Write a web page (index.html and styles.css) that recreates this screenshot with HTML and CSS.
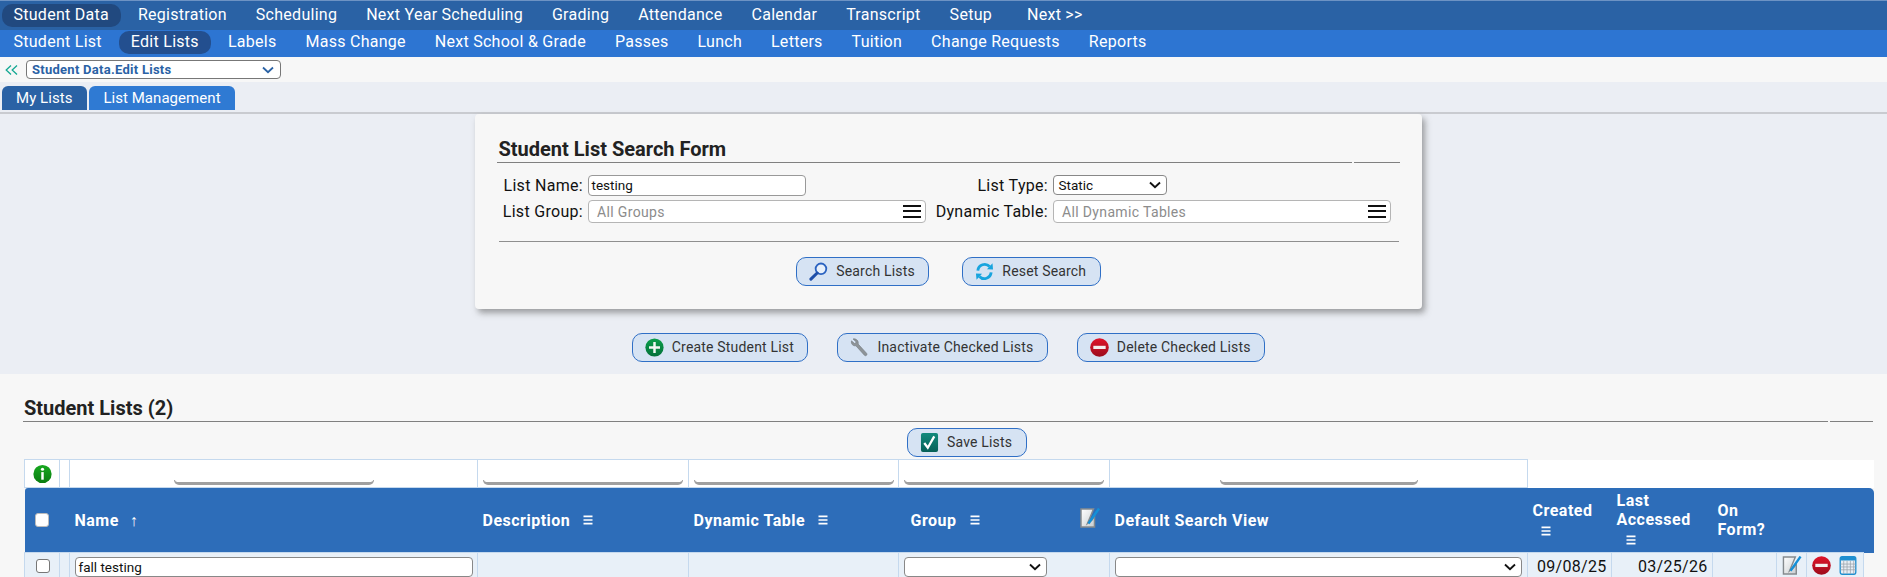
FILE: index.html
```html
<!DOCTYPE html>
<html lang="en">
<head>
<meta charset="utf-8">
<title>Student Lists</title>
<link rel="stylesheet" href="styles.css">
</head>
<body>
<svg class="defs" aria-hidden="true">
  <defs>
    <linearGradient id="gGreen" x1="0" y1="0" x2="0" y2="1"><stop offset="0" stop-color="#0aa04c"/><stop offset="1" stop-color="#04703a"/></linearGradient>
    <linearGradient id="gRed" x1="0" y1="0" x2="0" y2="1"><stop offset="0" stop-color="#e0142a"/><stop offset="1" stop-color="#9c0c1c"/></linearGradient>
    <linearGradient id="gTeal" x1="0" y1="0" x2="0" y2="1"><stop offset="0" stop-color="#128a7c"/><stop offset="1" stop-color="#056058"/></linearGradient>
    <linearGradient id="gInfo" x1="0" y1="0" x2="0" y2="1"><stop offset="0" stop-color="#17a81f"/><stop offset="1" stop-color="#0a7c12"/></linearGradient>
    <linearGradient id="gPage" x1="0" y1="0" x2="1" y2="1"><stop offset="0" stop-color="#ffffff"/><stop offset="1" stop-color="#c9cdd0"/></linearGradient>
    <symbol id="i-edit" viewBox="0 0 20 20">
      <path d="M1 1h12.500l-3.500 8.500-2.500 6 4.500-3.500 2.500-4.500V19H1z" fill="url(#gPage)" stroke="#858a8e" stroke-width="1.500"/>
      <path d="M19 .5 8.500 15.500" stroke="#1390d8" stroke-width="2.400" fill="none"/>
    </symbol>
    <symbol id="i-minus" viewBox="0 0 20 20">
      <circle cx="10" cy="10" r="9.800" fill="url(#gRed)"/>
      <rect x="3.500" y="8.200" width="13" height="3.400" fill="#f4eeee"/>
    </symbol>
    <symbol id="i-lines" viewBox="0 0 10 10">
      <path d="M.5 1.300h9M.5 5h9M.5 8.700h9" stroke="#fff" stroke-width="1.700" fill="none"/>
    </symbol>
  </defs>
</svg>

<nav class="nav nav-main">
  <a class="nav-item active">Student Data</a>
  <a class="nav-item">Registration</a>
  <a class="nav-item">Scheduling</a>
  <a class="nav-item">Next Year Scheduling</a>
  <a class="nav-item">Grading</a>
  <a class="nav-item">Attendance</a>
  <a class="nav-item">Calendar</a>
  <a class="nav-item">Transcript</a>
  <a class="nav-item">Setup</a>
  <a class="nav-item next">Next &gt;&gt;</a>
</nav>
<nav class="nav nav-sub">
  <a class="nav-item">Student List</a>
  <a class="nav-item active">Edit Lists</a>
  <a class="nav-item">Labels</a>
  <a class="nav-item">Mass Change</a>
  <a class="nav-item">Next School &amp; Grade</a>
  <a class="nav-item">Passes</a>
  <a class="nav-item">Lunch</a>
  <a class="nav-item">Letters</a>
  <a class="nav-item">Tuition</a>
  <a class="nav-item">Change Requests</a>
  <a class="nav-item">Reports</a>
</nav>

<div class="crumb">
  <svg class="crumb-back" viewBox="0 0 13 10" aria-hidden="true"><path d="M6 .5 1.200 5 6 9.500M12 .5 7.200 5 12 9.500" fill="none" stroke="#14a892" stroke-width="1.300"/></svg>
  <div class="crumb-select">
    <span>Student Data.Edit Lists</span>
    <svg viewBox="0 0 12 8" aria-hidden="true"><path d="M1 1.500 6 6.200 11 1.500" fill="none" stroke="#2a62a5" stroke-width="1.800"/></svg>
  </div>
</div>

<div class="upper">
  <div class="tabs">
    <a class="tab tab-dark">My Lists</a>
    <a class="tab tab-light">List Management</a>
  </div>

  <section class="card">
    <h2 class="title card-title"><span>Student List Search Form</span></h2>
    <div class="form-grid">
      <label class="lbl">List Name:</label>
      <div class="field-name">testing</div>
      <label class="lbl">List Type:</label>
      <div class="field-select">Static
        <svg viewBox="0 0 12 8" aria-hidden="true"><path d="M1 1.500 6 6.200 11 1.500" fill="none" stroke="#111" stroke-width="1.900"/></svg>
      </div>
      <label class="lbl">List Group:</label>
      <div class="field-multi">All Groups<span class="burger"></span></div>
      <label class="lbl">Dynamic Table:</label>
      <div class="field-multi">All Dynamic Tables<span class="burger"></span></div>
    </div>
    <hr class="rule">
    <div class="btn-row search-row">
      <a class="btn">
        <svg viewBox="0 0 20 20" aria-hidden="true"><circle cx="12.600" cy="7.200" r="5.600" fill="#e8f0fa" stroke="#2a62c0" stroke-width="1.900"/><path d="M8.600 11.600 2 18" stroke="#1f4fa8" stroke-width="3.200" stroke-linecap="round"/></svg>
        Search Lists</a>
      <a class="btn">
        <svg viewBox="0 0 20 20" aria-hidden="true"><path d="M3 9a7.200 7.200 0 0 1 12.400-4.200" fill="none" stroke="#18a4de" stroke-width="3"/><path d="M12.600 7.600 19 8 18.400 1.400z" fill="#18a4de"/><path d="M17 11a7.200 7.200 0 0 1-12.400 4.200" fill="none" stroke="#18a4de" stroke-width="3"/><path d="M7.400 12.400 1 12l.6 6.600z" fill="#18a4de"/></svg>
        Reset Search</a>
    </div>
  </section>

  <div class="btn-row action-row">
    <a class="btn">
      <svg viewBox="0 0 20 20" aria-hidden="true"><circle cx="10" cy="10" r="9.600" fill="url(#gGreen)"/><path d="M10 4.200v11.600M4.200 10h11.600" stroke="#f2f8f4" stroke-width="2.600"/></svg>
      Create Student List</a>
    <a class="btn">
      <svg viewBox="0 0 20 20" aria-hidden="true"><path d="M3.200 1 6.600 4.200 5 6 1.600 3C.8 6 3 8.800 6.200 8.200l9 10c1.400 1.400 3.600-.6 2.200-2.200L8.600 6.400C9.400 3 6.600 .4 3.200 1z" fill="#8e9498" stroke="#6e7478" stroke-width=".6"/></svg>
      Inactivate Checked Lists</a>
    <a class="btn">
      <svg viewBox="0 0 20 20" aria-hidden="true"><use href="#i-minus"/></svg>
      Delete Checked Lists</a>
  </div>
</div>

<section class="lists">
  <h2 class="title lists-title"><span>Student Lists (2)</span></h2>
  <div class="btn-row save-row">
    <a class="btn">
      <svg viewBox="0 0 20 20" aria-hidden="true"><rect x="1" y="0" width="18" height="20" rx="2" fill="url(#gTeal)"/><path d="M4.500 10.500 8.200 15.500 15 3.500" fill="none" stroke="#fff" stroke-width="2.400"/></svg>
      Save Lists</a>
  </div>

  <table class="grid">
    <colgroup>
      <col class="c-check"><col class="c-flag"><col class="c-name"><col class="c-desc"><col class="c-dyn"><col class="c-group"><col class="c-view"><col class="c-created"><col class="c-access"><col class="c-form"><col class="c-edit"><col class="c-act"><col class="c-end">
    </colgroup>
    <tr class="filter">
      <td class="info"><svg viewBox="0 0 20 20" aria-hidden="true"><circle cx="10" cy="10" r="9.600" fill="url(#gInfo)"/><circle cx="10" cy="5" r="1.700" fill="#fff"/><rect x="8.700" y="8" width="2.600" height="8" fill="#fff"/></svg></td>
      <td></td>
      <td class="fcell"><span class="fbar f-name"></span></td>
      <td class="fcell"><span class="fbar f-wide"></span></td>
      <td class="fcell"><span class="fbar f-wide"></span></td>
      <td class="fcell"><span class="fbar f-wide"></span></td>
      <td class="fcell"><span class="fbar f-view"></span></td>
      <td class="fblank" colspan="6"></td>
    </tr>
    <tr class="head">
      <th class="h-check"><span class="box box-h"></span></th>
      <th></th>
      <th><span class="hlabel">Name<span class="sort">↑</span></span></th>
      <th><span class="hlabel">Description<svg class="lines" aria-hidden="true"><use href="#i-lines"/></svg></span></th>
      <th><span class="hlabel">Dynamic Table<svg class="lines" aria-hidden="true"><use href="#i-lines"/></svg></span></th>
      <th class="h-group"><span class="hlabel">Group<svg class="lines" aria-hidden="true"><use href="#i-lines"/></svg></span><svg class="h-edit" aria-hidden="true"><use href="#i-edit"/></svg></th>
      <th>Default Search View</th>
      <th class="stack">Created<br><svg class="lines l-created" aria-hidden="true"><use href="#i-lines"/></svg></th>
      <th class="stack">Last<br>Accessed<br><svg class="lines l-access" aria-hidden="true"><use href="#i-lines"/></svg></th>
      <th class="stack">On<br>Form?</th>
      <th colspan="3" class="h-end"></th>
    </tr>
    <tr class="row">
      <td class="cell-check"><span class="box"></span></td>
      <td></td>
      <td class="cell-name"><div class="row-input">fall testing</div></td>
      <td></td>
      <td></td>
      <td class="cell-sel"><div class="row-select sel-group"><svg viewBox="0 0 12 8" aria-hidden="true"><path d="M1 1.500 6 6.200 11 1.500" fill="none" stroke="#111" stroke-width="1.900"/></svg></div></td>
      <td class="cell-sel"><div class="row-select"><svg viewBox="0 0 12 8" aria-hidden="true"><path d="M1 1.500 6 6.200 11 1.500" fill="none" stroke="#111" stroke-width="1.900"/></svg></div></td>
      <td class="date">09/08/25</td>
      <td class="date">03/25/26</td>
      <td></td>
      <td class="ico"><svg class="i-edit" aria-hidden="true"><use href="#i-edit"/></svg></td>
      <td class="ico"><div class="acts">
        <svg class="i-minus" aria-hidden="true"><use href="#i-minus"/></svg>
        <svg class="i-cal" viewBox="0 0 18 20" aria-hidden="true"><rect x=".8" y=".8" width="16.400" height="18.400" rx="2" fill="#e8eef4" stroke="#1f8fd0" stroke-width="1.400"/><rect x=".8" y=".8" width="16.400" height="4" rx="1.500" fill="#1f8fd0"/><path d="M4.500 5v14M8 5v14M11.500 5v14M15 5v14M1 8.500h16M1 11.500h16M1 14.500h16" stroke="#9aa4ac" stroke-width=".8" fill="none"/></svg>
      </div></td>
      <td class="end"></td>
    </tr>
  </table>
</section>
</body>
</html>
```

FILE: styles.css
```css
* { box-sizing: border-box; }

html, body {
  margin: 0;
  height: 577px;
  overflow: hidden;
}

body {
  background: #f7f7f7;
  color: #111;
  font-family: Roboto, "Liberation Sans", sans-serif;
  font-size: 14px;
}

.defs { position: absolute; width: 0; height: 0; }

/* navigation */
.nav {
  display: flex;
  color: #fff;
  font-size: 16px;
  letter-spacing: .27px;
  white-space: nowrap;
}

.nav-main {
  height: 30px;
  padding: 3px 0 0 2px;
  background: #2a62a5;
  border-top: 1px solid #6d93c4;
}

.nav-sub {
  height: 27px;
  padding: 1px 0 0 2px;
  background: #2d75d2;
}

.nav-item {
  height: 23px;
  line-height: 22px;
  padding: 0 12px 0 11.500px;
  margin-right: 5.500px;
  border-radius: 10px;
}

.nav-main .active { background: #21497f; }
.nav-sub .active { background: #234f8f; }
.nav-item.next { margin-left: 6px; }

/* breadcrumb */
.crumb {
  display: flex;
  align-items: center;
  gap: 8px;
  height: 25px;
  padding-left: 5px;
  background: #f7f7f7;
}

.crumb-back { width: 13px; height: 10px; }

.crumb-select {
  display: flex;
  align-items: center;
  justify-content: space-between;
  width: 255px;
  height: 19px;
  padding: 0 6px 0 5px;
  background: #fff;
  border: 1px solid #777;
  border-radius: 4px;
  color: #2a62a5;
  font-size: 13px;
  font-weight: 700;
  letter-spacing: .27px;
}

.crumb-select svg { width: 12px; height: 8px; }

/* upper band */
.upper {
  height: 292px;
  background: #ebeef4;
}

.tabs {
  display: flex;
  gap: 2.500px;
  height: 32px;
  padding: 4px 0 0 2px;
  border-bottom: 2px solid #c9cbd0;
}

.tab {
  height: 24px;
  line-height: 24px;
  border-radius: 6px 6px 0 0;
  color: #fff;
  font-size: 15px;
  letter-spacing: .05px;
  text-align: center;
}

.tab-dark { width: 84.500px; background: #2a62a5; }
.tab-light { width: 146px; background: #2f7ad3; }

/* section titles */
.title {
  display: flex;
  margin: 0;
  color: #222;
  font-size: 20px;
  font-weight: 700;
  position: relative;
}

/* search card */
.card {
  width: 947px;
  height: 195px;
  margin-left: 475px;
  padding: 24px 22px 0;
  background: #f7f7f7;
  border-radius: 4px;
  box-shadow: 3px 4px 6px rgba(90, 90, 90, .55);
}

.card-title {
  height: 25px;
  width: 903px;
  line-height: 23px;
  padding-left: 1.500px;
  border-bottom: 1px solid #808080;
}

.card-title::after {
  content: "";
  position: absolute;
  right: 46px;
  bottom: -1px;
  width: 2px;
  height: 1px;
  background: #f7f7f7;
}

.form-grid {
  display: grid;
  grid-template-columns: 91px 337.500px 127.500px 338px;
  grid-template-rows: 21px 23px;
  row-gap: 4px;
  margin-top: 12px;
  font-size: 16px;
  letter-spacing: .3px;
}

.lbl {
  display: flex;
  align-items: center;
  justify-content: flex-end;
  padding-right: 5px;
  color: #111;
}

.field-name {
  width: 218px;
  height: 21px;
  line-height: 19px;
  padding-left: 2.500px;
  background: #fff;
  border: 1px solid #999;
  border-radius: 4px;
  font-size: 13.500px;
  letter-spacing: 0;
}

.field-select {
  display: flex;
  align-items: center;
  justify-content: space-between;
  width: 114px;
  height: 20px;
  padding: 0 5px 0 4.500px;
  background: #fff;
  border: 1px solid #888;
  border-radius: 4px;
  font-size: 13.500px;
  letter-spacing: 0;
}

.field-select svg { width: 12px; height: 8px; }

.field-multi {
  display: flex;
  align-items: center;
  justify-content: space-between;
  height: 23px;
  padding: 0 4px 0 8px;
  background: #fff;
  border: 1px solid #b5b5b5;
  border-radius: 4px;
  color: #8c8c8c;
  font-size: 14px;
  letter-spacing: .35px;
}

.burger {
  width: 18px;
  height: 13px;
  border-top: 2.500px solid #111;
  border-bottom: 2.500px solid #111;
  position: relative;
}

.burger::after {
  content: "";
  position: absolute;
  left: 0;
  right: 0;
  top: 2.800px;
  height: 2.500px;
  background: #111;
}

.rule {
  width: 900px;
  height: 1px;
  margin: 18px 0 0 2px;
  border: 0;
  background: #8f8f8f;
}

/* buttons */
.btn-row { display: flex; justify-content: center; }
.search-row { gap: 33px; margin-top: 15px; }
.action-row { gap: 29px; margin-top: 24px; padding-left: 10px; }
.save-row { justify-content: flex-start; margin: 6px 0 0 883px; }

.btn {
  display: flex;
  align-items: center;
  gap: 8px;
  height: 28.500px;
  padding: 0 13.500px 0 12px;
  background: #d6e3f3;
  border: 1px solid #2f6fc6;
  border-radius: 10px;
  color: #333;
  font-size: 14px;
  letter-spacing: .18px;
  white-space: nowrap;
}

.btn svg { width: 19px; height: 19px; flex: none; }

/* student lists */
.lists { padding: 0 0 0 24px; }

.lists-title {
  width: 1850px;
  height: 48px;
  margin-left: -1px;
  padding: 21px 0 0 1px;
  line-height: 26px;
  border-bottom: 1px solid #808080;
}

.lists-title::after {
  content: "";
  position: absolute;
  right: 43px;
  bottom: -1px;
  width: 2px;
  height: 1px;
  background: #f7f7f7;
}

.grid {
  width: 1849px;
  margin-top: 2.500px;
  border-collapse: collapse;
  table-layout: fixed;
}

.c-check { width: 35px; }
.c-flag { width: 10px; }
.c-name { width: 408px; }
.c-desc { width: 211px; }
.c-dyn { width: 210px; }
.c-group { width: 211px; }
.c-view { width: 418px; }
.c-created { width: 84px; }
.c-access { width: 101px; }
.c-form { width: 64px; }
.c-edit { width: 30px; }
.c-act { width: 57px; }
.c-end { width: 10px; }

.grid td, .grid th { padding: 0; }

.filter { height: 28px; }
.filter td { background: #fff; border: 1px solid #c5d9ee; vertical-align: bottom; }
.filter .fblank { border: 0; }
.info { text-align: center; vertical-align: middle !important; }
.info svg { display: inline-block; width: 19px; height: 20px; vertical-align: middle; }
.fcell { text-align: center; }

.fbar {
  display: block;
  height: 5px;
  margin: 0 auto 2.500px;
  border: 1px solid #a0a0a0;
  border-top: 0;
  border-bottom-width: 3px;
  border-radius: 0 0 6px 6px;
}

.f-name { width: 200px; margin-left: 104px; }
.f-wide { width: 200px; }
.f-view { width: 198px; margin-left: 110px; }

.head { height: 65px; background: #2d6db9; color: #fff; }

.head th {
  font-size: 16px;
  font-weight: 700;
  line-height: 19px;
  letter-spacing: .5px;
  text-align: left;
  vertical-align: middle;
  padding-left: 5px;
}

.head th:first-child { border-radius: 3px 0 0 0; }
.head th:last-child { border-radius: 0 5px 0 0; }
.head .h-check { padding-left: 10.500px; }
.head .h-group { padding-left: 12px; }

.hlabel { display: inline-flex; align-items: center; }
.sort { margin-left: 11px; font-weight: 700; }

.lines { display: inline-block; width: 10px; height: 10px; margin-left: 13px; }
.l-created { margin-left: 8px; vertical-align: -1px; }
.l-access { margin-left: 9px; vertical-align: -1px; }

.h-group { position: relative; }
.h-edit { position: absolute; right: 10px; top: 20px; width: 20px; height: 20px; }

.box {
  display: block;
  width: 14px;
  height: 14px;
  background: #fff;
  border: 1px solid #777;
  border-radius: 3px;
}

.box-h { border-color: #bbb; }

.row { height: 40px; }
.row td {
  background: #e8f0f8;
  border: 1px solid #c5d9ee;
  vertical-align: top;
  font-size: 16px;
  letter-spacing: .3px;
}

.row td.end { background: transparent; border: 0; }
.cell-check { padding: 6px 0 0 10.500px !important; }
.cell-name { padding: 4px 5px 0 !important; }
.cell-sel { padding: 4px 5px 0 !important; }

.row-input {
  width: 398px;
  height: 20px;
  line-height: 19px;
  padding-left: 2.500px;
  background: #fff;
  border: 1px solid #888;
  border-radius: 4px;
  font-size: 13.500px;
  letter-spacing: 0;
}

.row-select {
  display: flex;
  align-items: center;
  justify-content: flex-end;
  height: 20px;
  padding-right: 5px;
  background: #fff;
  border: 1px solid #888;
  border-radius: 4px;
}

.sel-group { width: 143px; }
.row-select svg { width: 12px; height: 8px; }

.date { text-align: right; padding: 4px 4.500px 0 0 !important; line-height: 20px; }

.ico { padding: 3px 0 0 !important; }
.i-edit { display: block; width: 20px; height: 19px; margin-left: 5px; }
.acts { display: flex; gap: 8px; padding-left: 5px; }
.i-minus { width: 19px; height: 19px; }
.i-cal { width: 18px; height: 19px; }
```
